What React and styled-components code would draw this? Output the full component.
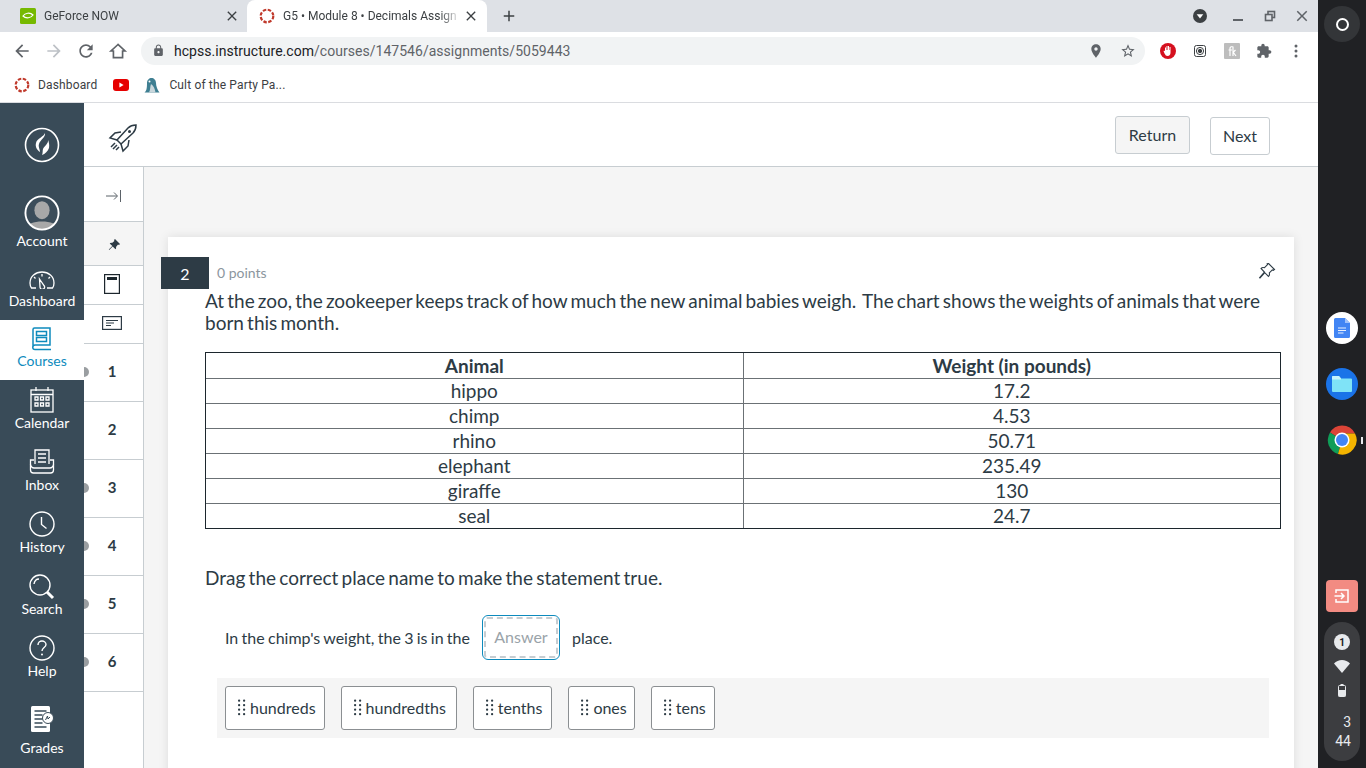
import React from "react";
import styled, { createGlobalStyle } from "styled-components";

const GlobalStyle = createGlobalStyle`
  html, body {
    margin: 0;
    padding: 0;
    height: 768px;
    overflow: hidden;
    background: #fff;
  }
  * { box-sizing: border-box; }
`;

const Screen = styled.div`
  display: flex;
  width: 1366px;
  height: 768px;
  overflow: hidden;
`;

const Browser = styled.div`
  width: 1318px;
  display: flex;
  flex-direction: column;
  font-family: Roboto, "Liberation Sans", sans-serif;
`;

/* chrome */
const TabStrip = styled.div`
  height: 32px;
  background: #dee1e6;
  display: flex;
  align-items: flex-end;
  padding-left: 8px;
  flex-shrink: 0;
`;

const Tab = styled.div`
  width: ${(p) => (p.$active ? "240px" : "232px")};
  margin-right: ${(p) => (p.$active ? "0" : "7px")};
  height: 32px;
  display: flex;
  align-items: center;
  padding: 0 ${(p) => (p.$active ? "8px" : "0")} 0 12px;
  gap: 8px;
  font-size: 12px;
  color: #3c4043;
  background: ${(p) => (p.$active ? "#fff" : "transparent")};
  border-radius: 8px 8px 0 0;
`;

const TabTitle = styled.span`
  flex: 1;
  white-space: nowrap;
  margin-right: -6px;
  mask-image: linear-gradient(to right, #000 88%, transparent);
`;

const NewTab = styled.div`
  margin-left: 13px;
  height: 32px;
  display: flex;
  align-items: center;
`;

const WindowControls = styled.div`
  margin-left: auto;
  height: 32px;
  display: flex;
  align-items: center;
  padding-right: 7px;
  gap: 16px;
`;

const Toolbar = styled.div`
  height: 37px;
  display: flex;
  align-items: center;
  padding: 0 0 0 12px;
  background: #fff;
  flex-shrink: 0;
`;

const NavIcons = styled.div`
  display: flex;
  gap: 12px;
  align-items: center;
  width: 129px;
`;

const Omnibox = styled.div`
  width: 1004px;
  height: 28px;
  border-radius: 14px;
  background: #f1f3f4;
  display: flex;
  align-items: center;
  padding: 0 9px 0 11px;
  font-size: 14px;
  letter-spacing: 0.03px;
`;

const Host = styled.span`
  margin-left: 9px;
  color: #202124;
`;

const UrlPath = styled.span`
  color: #5f6368;
`;

const OmniIcons = styled.div`
  margin-left: auto;
  display: flex;
  gap: 16px;
`;

const Extensions = styled.div`
  display: flex;
  align-items: center;
  gap: 16px;
  margin-left: 15px;
`;

const Bookmarks = styled.div`
  height: 34px;
  border-bottom: 1px solid #dadce0;
  display: flex;
  align-items: center;
  padding: 0 0 2px 14px;
  font-size: 12px;
  letter-spacing: 0.15px;
  color: #3c4043;
  background: #fff;
  flex-shrink: 0;
`;

const BookmarkLabel = styled.span`
  margin-left: ${(p) => p.$left || 8}px;
`;

const BookmarkIcon = styled.svg`
  margin-left: ${(p) => p.$left || 0}px;
  flex-shrink: 0;
`;

/* canvas page */
const Page = styled.div`
  flex: 1;
  display: flex;
  min-height: 0;
  font-family: Lato, "Liberation Sans", sans-serif;
`;

const GlobalNav = styled.nav`
  width: 84px;
  background: #394b58;
  display: flex;
  flex-direction: column;
  align-items: stretch;
  flex-shrink: 0;
`;

const NavItem = styled.div`
  height: ${(p) => p.$h}px;
  display: flex;
  flex-direction: column;
  align-items: center;
  padding-top: ${(p) => p.$top || 0}px;
  gap: ${(p) => p.$gap || 0}px;
  font-size: 14px;
  line-height: 17px;
  color: ${(p) => (p.$active ? "#0e8bbd" : "#fff")};
  background: ${(p) => (p.$active ? "#fff" : "transparent")};
`;

const Main = styled.div`
  flex: 1;
  display: flex;
  flex-direction: column;
  min-width: 0;
`;

const TopBar = styled.div`
  height: 64px;
  background: #fff;
  border-bottom: 1px solid #c7cdd1;
  display: flex;
  align-items: center;
  padding: 1px 48px 0 24px;
  flex-shrink: 0;
`;

const Rocket = styled.svg`
  margin-top: 6px;
`;

const TopButton = styled.div`
  height: 38px;
  display: flex;
  align-items: center;
  justify-content: center;
  border: 1px solid #c7cdd1;
  border-radius: 3px;
  font-size: 16px;
  color: #2d3b45;
  padding-bottom: 2px;
  width: ${(p) => p.$w}px;
  background: ${(p) => (p.$plain ? "#fff" : "#f5f5f5")};
  margin-left: ${(p) => (p.$plain ? "20px" : "auto")};
  position: relative;
  top: ${(p) => (p.$plain ? 1 : 0)}px;
`;

const Body = styled.div`
  flex: 1;
  display: flex;
  min-height: 0;
  background: #f5f5f5;
`;

const QuestionNav = styled.div`
  width: 60px;
  background: #fff;
  border-right: 1px solid #c7cdd1;
  flex-shrink: 0;
  display: flex;
  flex-direction: column;
`;

const NavRow = styled.div`
  height: ${(p) => p.$h}px;
  display: flex;
  align-items: center;
  justify-content: center;
  border-bottom: 1px solid #c7cdd1;
  background: ${(p) => (p.$shaded ? "#f5f5f5" : "#fff")};
  position: relative;
  font-size: 15px;
  font-weight: 700;
  color: #2d3b45;
  padding: ${(p) => p.$pad || "0 3px 0 0"};
`;

const NavDot = styled.span`
  position: absolute;
  left: 0;
  top: 50%;
  width: 5px;
  height: 10px;
  margin-top: -6px;
  background: #9a9ea1;
  border-radius: 0 5px 5px 0;
`;

const Content = styled.div`
  flex: 1;
  padding: 70px 24px 0;
  min-width: 0;
`;

const Card = styled.section`
  position: relative;
  background: #fff;
  height: 600px;
  padding: 21px 13px 0 37px;
  box-shadow: 0 0 10px rgba(0, 0, 0, 0.1);
`;

const QuestionBadge = styled.div`
  position: absolute;
  left: -7px;
  top: 20px;
  width: 48px;
  height: 32px;
  background: #2d3b45;
  color: #fff;
  font-size: 16px;
  display: flex;
  align-items: center;
  justify-content: center;
`;

const PinIcon = styled.svg`
  position: absolute;
  right: 18px;
  top: 25px;
`;

const Points = styled.div`
  font-size: 14px;
  line-height: 30px;
  height: 32px;
  color: #8b969e;
  margin-left: 12px;
`;

const Prompt = styled.p`
  margin: 0;
  font-size: 19px;
  line-height: 22px;
  color: #2d3b45;
  height: 52px;
  word-spacing: -0.09em;
`;

const ZooTable = styled.table`
  width: 1076px;
  border-collapse: collapse;
  outline: 1px solid #1c262d;
  outline-offset: -1px;
  margin-top: 10px;
  table-layout: fixed;
  font-size: 19px;
  color: #2d3b45;
`;

const Cell = styled.td`
  height: ${(p) => (p.$head ? 26 : 25)}px;
  padding: 0 0 1px;
  text-align: center;
  line-height: 23px;
  border: 1px solid #6b7175;
  font-weight: ${(p) => (p.$head ? 700 : 400)};
`;

const DragPrompt = styled.p`
  margin: 37px 0 0;
  font-size: 19px;
  line-height: 24px;
  color: #2d3b45;
  word-spacing: -0.085em;
`;

const Sentence = styled.div`
  display: flex;
  align-items: center;
  margin: 25px 0 0 20px;
  height: 45px;
  font-size: 16px;
  color: #2d3b45;
  word-spacing: -0.05em;
`;

const AnswerSlot = styled.div`
  width: 78px;
  height: 45px;
  margin: 0 12px;
  border: 1px solid #0e8bbd;
  border-radius: 6px;
  padding: 1px;
  display: flex;
`;

const AnswerInner = styled.div`
  flex: 1;
  border: 2px dashed #c7cdd1;
  border-radius: 3px;
  display: flex;
  align-items: center;
  justify-content: center;
  color: #9aa3a9;
  padding-bottom: 3px;
`;

const ChoiceBank = styled.div`
  margin: 18px 12px 0;
  height: 60px;
  background: #f5f5f5;
  padding: 8px;
  display: flex;
  gap: 16px;
`;

const Choice = styled.div`
  height: 44px;
  border: 1px solid #8b8f92;
  border-radius: 3px;
  background: #fff;
  display: flex;
  align-items: center;
  gap: 3px;
  padding: 0 ${(p) => p.$pad}px 2px 11px;
  font-size: 16px;
  color: #2d3b45;
`;

/* chrome os shelf */
const Shelf = styled.aside`
  width: 48px;
  background: #202124;
  display: flex;
  flex-direction: column;
  align-items: center;
  padding: 6px 0 7px;
  font-family: Roboto, "Liberation Sans", sans-serif;
`;

const Launcher = styled.div`
  width: 36px;
  height: 36px;
  border-radius: 50%;
  background: #333538;
  display: flex;
  align-items: center;
  justify-content: center;
`;

const LauncherRing = styled.div`
  width: 13px;
  height: 13px;
  border-radius: 50%;
  border: 2px solid #fff;
`;

const ShelfApps = styled.div`
  margin-top: 270px;
  display: flex;
  flex-direction: column;
  gap: 24px;
`;

const ShelfApp = styled.div`
  position: relative;
  width: 32px;
  height: 32px;
  border-radius: 50%;
  background: ${(p) => p.$bg};
  display: flex;
  align-items: center;
  justify-content: center;
  overflow: ${(p) => (p.$running ? "visible" : "hidden")};
`;

const RunningMark = styled.span`
  position: absolute;
  right: -5px;
  top: 13px;
  width: 2px;
  height: 7px;
  background: #e8eaed;
`;

const ExitButton = styled.div`
  margin-top: auto;
  width: 32px;
  height: 32px;
  border-radius: 4px;
  background: #f28b82;
  display: flex;
  align-items: center;
  justify-content: center;
`;

const StatusPill = styled.div`
  margin-top: 10px;
  width: 36px;
  height: 139px;
  border-radius: 18px;
  background: #3c3d40;
  display: flex;
  flex-direction: column;
  align-items: center;
  padding-top: 12px;
  color: #e8eaed;
  font-size: 13px;
`;

const Notify = styled.div`
  width: 16px;
  height: 16px;
  border-radius: 50%;
  background: #e8eaed;
  color: #202124;
  font-size: 10px;
  font-weight: 700;
  display: flex;
  align-items: center;
  justify-content: center;
  flex-shrink: 0;
`;

const StatusIcon = styled.svg`
  margin-top: ${(p) => p.$top}px;
  flex-shrink: 0;
`;

const Clock = styled.div`
  margin-top: 16px;
  line-height: 19px;
  text-align: right;
  width: 18px;
  font-size: 14px;
`;

const grey = "#5f6368";
const closePath =
  "M19 6.41L17.59 5 12 10.59 6.41 5 5 6.41 10.59 12 5 17.59 6.41 19 12 13.41 17.59 19 19 17.59 13.41 12z";

const MaterialIcon = ({ d, size = 18, color = grey }) => (
  <svg width={size} height={size} viewBox="0 0 24 24" fill={color}>
    <path d={d} />
  </svg>
);

const CanvasFavicon = () => (
  <BookmarkIcon width="16" height="16" viewBox="0 0 16 16" fill="none">
    <circle cx="8" cy="8" r="6.3" stroke="#c0392b" strokeWidth="2.2" strokeDasharray="3.4 1.55" />
  </BookmarkIcon>
);

const Grip = () => (
  <svg width="10" height="17" viewBox="0 0 10 17" fill="#2d3b45">
    {[0.5, 5, 9.5, 14].map((y) =>
      [1, 6].map((x) => <rect key={`${x}-${y}`} x={x} y={y} width="2.2" height="2.2" rx="1" />)
    )}
  </svg>
);

const rows = [
  ["hippo", "17.2"],
  ["chimp", "4.53"],
  ["rhino", "50.71"],
  ["elephant", "235.49"],
  ["giraffe", "130"],
  ["seal", "24.7"],
];

const choices = [
  ["hundreds", 8],
  ["hundredths", 10],
  ["tenths", 9],
  ["ones", 7],
  ["tens", 8],
];

const questions = [
  [1, true],
  [2, false],
  [3, true],
  [4, true],
  [5, true],
  [6, true],
];

const App = () => {
  return (
    <Screen>
      <GlobalStyle />
      <Browser>
        <TabStrip>
          <Tab>
            <svg width="16" height="16" viewBox="0 0 16 16">
              <rect width="16" height="16" rx="1.5" fill="#76b900" />
              <path d="M3 8c2-3 7-4 10-1-2 3-7 4-10 1z" fill="none" stroke="#fff" strokeWidth="1.2" />
            </svg>
            <TabTitle>GeForce NOW</TabTitle>
            <MaterialIcon size={16} color="#3c4043" d={closePath} />
          </Tab>
          <Tab $active>
            <CanvasFavicon />
            <TabTitle>G5 • Module 8 • Decimals Assign</TabTitle>
            <MaterialIcon size={16} color="#3c4043" d={closePath} />
          </Tab>
          <NewTab>
            <MaterialIcon size={18} color="#3c4043" d="M19 13h-6v6h-2v-6H5v-2h6V5h2v6h6v2z" />
          </NewTab>
          <WindowControls>
            <svg width="14" height="14" viewBox="0 0 14 14">
              <circle cx="7" cy="7" r="7" fill="#3c4043" />
              <path d="M3.7 5.2h6.6L7 9.6z" fill="#fff" />
            </svg>
            <svg width="14" height="14" viewBox="0 0 14 14" style={{ marginLeft: 8 }}>
              <rect x="2" y="10" width="10" height="2" fill="#5f6368" />
            </svg>
            <svg width="14" height="14" viewBox="0 0 14 14" fill="none" stroke="#5f6368" strokeWidth="1.6" style={{ marginLeft: 2 }}>
              <rect x="5" y="2.5" width="6.5" height="6" />
              <rect x="2.5" y="5.5" width="6.5" height="6" fill="#dee1e6" />
            </svg>
            <MaterialIcon size={18} d={closePath} />
          </WindowControls>
        </TabStrip>

        <Toolbar>
          <NavIcons>
            <MaterialIcon size={20} d="M20 11H7.83l5.59-5.59L12 4l-8 8 8 8 1.41-1.41L7.83 13H20v-2z" />
            <MaterialIcon size={20} color="#bdc1c6" d="M12 4l-1.41 1.41L16.17 11H4v2h12.17l-5.58 5.59L12 20l8-8z" />
            <MaterialIcon size={20} d="M17.65 6.35C16.2 4.9 14.21 4 12 4c-4.42 0-7.99 3.58-7.99 8s3.57 8 7.99 8c3.73 0 6.84-2.55 7.73-6h-2.08c-.82 2.33-3.04 4-5.65 4-3.31 0-6-2.69-6-6s2.69-6 6-6c1.66 0 3.14.69 4.22 1.78L13 11h7V4l-2.35 2.35z" />
            <svg width="20" height="20" viewBox="0 0 24 24" fill="none" stroke={grey} strokeWidth="2">
              <path d="M12 4.2L3.6 12H6.5v8h11v-8h2.900z" />
            </svg>
          </NavIcons>
          <Omnibox>
            <MaterialIcon size={13} d="M18 8h-1V6c0-2.76-2.24-5-5-5S7 3.24 7 6v2H6c-1.1 0-2 .9-2 2v10c0 1.1.9 2 2 2h12c1.1 0 2-.9 2-2V10c0-1.1-.9-2-2-2zm-6 9c-1.1 0-2-.9-2-2s.9-2 2-2 2 .9 2 2-.9 2-2 2zm3.1-9H8.9V6c0-1.71 1.39-3.1 3.1-3.1 1.71 0 3.1 1.39 3.1 3.1v2z" />
            <Host>hcpss.instructure.com</Host>
            <UrlPath>/courses/147546/assignments/5059443</UrlPath>
            <OmniIcons>
              <MaterialIcon size={16} d="M12 2C8.13 2 5 5.13 5 9c0 5.25 7 13 7 13s7-7.75 7-13c0-3.87-3.13-7-7-7zm0 9.5c-1.38 0-2.5-1.12-2.5-2.5s1.12-2.5 2.5-2.5 2.5 1.12 2.5 2.5-1.12 2.5-2.5 2.5z" />
              <MaterialIcon size={16} d="M22 9.24l-7.19-.62L12 2 9.19 8.63 2 9.24l5.46 4.73L5.82 21 12 17.27 18.18 21l-1.63-7.03L22 9.24zM12 15.4l-3.76 2.27 1-4.28-3.32-2.88 4.38-.38L12 6.1l1.71 4.04 4.38.38-3.32 2.88 1 4.28L12 15.4z" />
            </OmniIcons>
          </Omnibox>
          <Extensions>
            <svg width="16" height="16" viewBox="0 0 16 16">
              <circle cx="8" cy="8" r="8" fill="#d5101f" />
              <path d="M5 8V4.500h1V7h.5V3h1v4H8V3h1v4h.5V4h1v5.500c0 2-1 3.500-3 3.500-1.500 0-2-.8-3-2.500L3.500 8c.5-.5 1-.4 1.500 0z" fill="#fff" />
            </svg>
            <svg width="16" height="16" viewBox="0 0 16 16" fill="none" stroke="#3c4043">
              <rect x="2.500" y="2.500" width="11" height="11" rx="2" />
              <circle cx="8" cy="8" r="3.600" />
              <circle cx="8" cy="8" r="1.700" fill="#3c4043" />
            </svg>
            <svg width="16" height="16" viewBox="0 0 16 16">
              <rect width="16" height="16" rx="1" fill="#bdbdbd" />
              <path d="M6 13V5.500C6 4 7 3.500 8.500 3.500M4.500 7H8M9 3.500V13M9 9l3 4M9 9.500l2.500-2.500" fill="none" stroke="#fff" strokeWidth="1.200" />
            </svg>
            <MaterialIcon size={16} d="M20.5 11H19V7c0-1.1-.9-2-2-2h-4V3.5C13 2.12 11.88 1 10.5 1S8 2.12 8 3.5V5H4c-1.1 0-1.99.9-1.99 2v3.8H3.5c1.49 0 2.7 1.21 2.7 2.7s-1.21 2.7-2.7 2.7H2V20c0 1.1.9 2 2 2h3.8v-1.5c0-1.49 1.21-2.7 2.7-2.7 1.49 0 2.7 1.21 2.7 2.7V22H17c1.1 0 2-.9 2-2v-4h1.5c1.38 0 2.5-1.12 2.5-2.5S21.88 11 20.5 11z" />
            <svg width="16" height="16" viewBox="0 0 16 16" fill={grey}>
              <circle cx="8" cy="3" r="1.500" />
              <circle cx="8" cy="8" r="1.500" />
              <circle cx="8" cy="13" r="1.500" />
            </svg>
          </Extensions>
        </Toolbar>

        <Bookmarks>
          <CanvasFavicon />
          <BookmarkLabel>Dashboard</BookmarkLabel>
          <BookmarkIcon $left={16} width="16" height="12" viewBox="0 0 16 12">
            <rect width="16" height="12" rx="3" fill="#e60000" />
            <path d="M6.400 3.400v5.200L10.600 6z" fill="#fff" />
          </BookmarkIcon>
          <BookmarkIcon $left={15} width="16" height="16" viewBox="0 0 16 16">
            <path d="M0.500 15.500C3 14 3 9 3 6c0-3 2.200-5 4.500-5S12 3 12 6c0 3 1.500 7 3.500 9.500z" fill="#3f7f92" />
            <path d="M5 15.500c1.500-2.500 1-6 2-8.500 2.500 1.500 4 5 4.500 8.500z" fill="#c9d7dc" />
            <circle cx="5.500" cy="4.500" r="1" fill="#fff" />
          </BookmarkIcon>
          <BookmarkLabel $left={9}>Cult of the Party Pa...</BookmarkLabel>
        </Bookmarks>

        <Page>
          <GlobalNav>
            <NavItem $h={81} $top={24}>
              <svg width="36" height="36" viewBox="0 0 36 36" fill="none">
                <circle cx="18" cy="18" r="16.500" stroke="#fff" strokeWidth="1.600" />
                <path d="M21 6c1 4-5 7-6 11-1 3 1 5 1 8-3-2-5-5-4-9 1-5 8-6 9-10zM24 13c.5 4-4 6-5 9-.6 2 0 4-1 6 3-1 6-4 7-7 .6-3 0-6-1-8z" fill="#fff" />
              </svg>
            </NavItem>
            <NavItem $h={76} $top={11} $gap={1}>
              <svg width="36" height="36" viewBox="0 0 38 38">
                <defs>
                  <clipPath id="avatarClip">
                    <circle cx="19" cy="19" r="17.500" />
                  </clipPath>
                </defs>
                <g clipPath="url(#avatarClip)">
                  <rect width="38" height="38" fill="#3c4d5a" />
                  <ellipse cx="19" cy="16" rx="8" ry="9.500" fill="#a8a8a8" />
                  <path d="M2 38c0-8 8-10 17-10s17 2 17 10z" fill="#a8a8a8" />
                </g>
                <circle cx="19" cy="19" r="17.500" fill="none" stroke="#fff" strokeWidth="2" />
              </svg>
              <span>Account</span>
            </NavItem>
            <NavItem $h={60} $top={11} $gap={3}>
              <svg width="26" height="18" viewBox="0 0 26 18" fill="none" stroke="#fff" strokeWidth="1.300">
                <path d="M7 17H2.500C1.300 15.500 1 13.500 1 12 1 5.500 6.500 1 13 1s12 4.500 12 11c0 1.500-.3 3.500-1.500 5H18" />
                <path d="M10.500 8l4.500 6.500a2.300 2.300 0 1 1-4 1.500z" />
                <path d="M13 3v2.500M5 6l1.500 1.500M21 6l-1.500 1.500" />
              </svg>
              <span>Dashboard</span>
            </NavItem>
            <NavItem $h={60} $top={7} $gap={1} $active>
              <svg width="20" height="24" viewBox="0 0 20 24" fill="none" stroke="#0e8bbd" strokeWidth="1.500">
                <path d="M1 20V2.500A1.500 1.500 0 0 1 2.500 1H18v17H3a2 2 0 0 0 0 4.500h16" />
                <rect x="4.500" y="4.500" width="10" height="4" />
                <rect x="4.500" y="10.500" width="10" height="4" />
              </svg>
              <span>Courses</span>
            </NavItem>
            <NavItem $h={62} $top={7} $gap={1}>
              <svg width="24" height="26" viewBox="0 0 24 26" fill="none" stroke="#fff" strokeWidth="1.300">
                <rect x="1" y="3" width="22" height="22" />
                <path d="M1 7.500h22M6 0v4M18 0v4" />
                <path d="M5 10h3v3H5zM10.500 10h3v3h-3zM16 10h3v3h-3zM5 16h3v3H5zM10.500 16h3v3h-3zM16 16h3v3h-3z" />
              </svg>
              <span>Calendar</span>
            </NavItem>
            <NavItem $h={62} $top={7} $gap={2}>
              <svg width="26" height="25" viewBox="0 0 26 25" fill="none" stroke="#fff" strokeWidth="1.300">
                <path d="M6 15V1h14v14" />
                <path d="M9 5h8M9 9h8M9 13h8" />
                <path d="M5 11H1.500v10a3 3 0 0 0 3 3h17a3 3 0 0 0 3-3V11H21" />
                <path d="M1.500 15.500c0 2 2 3.500 3.500 3.500h16c1.500 0 3.500-1.500 3.500-3.500" />
              </svg>
              <span>Inbox</span>
            </NavItem>
            <NavItem $h={62} $top={7} $gap={1}>
              <svg width="26" height="26" viewBox="0 0 26 26" fill="none" stroke="#fff" strokeWidth="1.400">
                <circle cx="13" cy="13" r="12" />
                <path d="M12.500 6v7.500l5 4" />
              </svg>
              <span>History</span>
            </NavItem>
            <NavItem $h={62} $top={8} $gap={0}>
              <svg width="26" height="26" viewBox="0 0 26 26" fill="none" stroke="#fff" strokeWidth="1.400">
                <circle cx="11" cy="11" r="10" />
                <path d="M5 10c.5-3 2.500-5 5-5" />
                <path d="M18 18l6 6" strokeWidth="3" />
              </svg>
              <span>Search</span>
            </NavItem>
            <NavItem $h={62} $top={7} $gap={1}>
              <svg width="26" height="26" viewBox="0 0 26 26" fill="none" stroke="#fff" strokeWidth="1.400">
                <circle cx="13" cy="13" r="12" />
                <path d="M9 10c0-2.500 2-4 4-4s4 1.500 4 3.500c0 3-4 3-4 6.500" />
                <circle cx="13" cy="19.500" r="1" fill="#fff" stroke="none" />
              </svg>
              <span>Help</span>
            </NavItem>
            <NavItem $h={78} $top={15} $gap={6}>
              <svg width="24" height="28" viewBox="0 0 24 28">
                <rect x="1" y="1" width="19" height="26" rx="1.500" fill="#fff" />
                <path d="M4.500 6h12M4.500 10h8M4.500 14h8M4.500 18h8M4.500 22h12" stroke="#394b58" strokeWidth="1.400" />
                <circle cx="18" cy="13" r="5.500" fill="#fff" stroke="#394b58" />
                <path d="M15.500 15l2-4 .5 3 2-2" stroke="#394b58" fill="none" />
              </svg>
              <span>Grades</span>
            </NavItem>
          </GlobalNav>

          <Main>
            <TopBar>
              <Rocket width="30" height="30" viewBox="0 0 30 30" fill="none" stroke="#2d3b45" strokeWidth="1.500">
                <path d="M9 17L20 5c2-2 5-3 8-3 0 3-1 6-3 8L13 21z" />
                <path d="M9 17l-7-2 5-5 6-1M13 21l2 7 5-5 1-6" />
                <circle cx="21.500" cy="8.500" r="1.500" fill="#2d3b45" stroke="none" />
                <path d="M7 20l-4 4M9 22l-4 4M11 24l-3 3" />
              </Rocket>
              <TopButton $w={75}>Return</TopButton>
              <TopButton $w={60} $plain>Next</TopButton>
            </TopBar>
            <Body>
              <QuestionNav>
                <NavRow $h={55} $pad="3px 0 0 1px">
                  <svg width="16" height="12" viewBox="0 0 16 12" fill="none" stroke="#5b6268">
                    <path d="M0 6h11M8 2.500L11.500 6 8 9.500M14.500 0v12" />
                  </svg>
                </NavRow>
                <NavRow $h={44} $shaded $pad="3px 0 0 1px">
                  <svg width="12" height="12" viewBox="0 0 12 12" fill="#2d3b45">
                    <path d="M7 0l5 5-1 1-1-.4L8 8c.3 1 .1 1.800-.5 2.300L4.700 7.500 1.200 11 .8 10.600l3.500-3.600L1.700 4.500C2.200 3.900 3 3.700 4 4l2.400-2-.4-1z" />
                  </svg>
                </NavRow>
                <NavRow $h={39} $pad="0 3px 2px 0">
                  <svg width="16" height="20" viewBox="0 0 16 20" fill="none" stroke="#1c262d" strokeWidth="1.200">
                    <rect x="0.600" y="0.600" width="14.800" height="18.800" />
                    <rect x="3" y="3" width="10" height="3" fill="#1c262d" stroke="none" />
                  </svg>
                </NavRow>
                <NavRow $h={39} $pad="0 3px 2px 0">
                  <svg width="20" height="14" viewBox="0 0 20 14" fill="none" stroke="#2d3b45" strokeWidth="1.200">
                    <rect x="0.600" y="0.600" width="18.800" height="12.800" />
                    <path d="M4 4.500h12M4 7h8M4 9.500h5" />
                  </svg>
                </NavRow>
                {questions.map(([n, dot]) => (
                  <NavRow key={n} $h={58} $pad="0 3px 3px 0">
                    {dot && <NavDot />}
                    {n}
                  </NavRow>
                ))}
              </QuestionNav>
              <Content>
                <Card>
                  <QuestionBadge>2</QuestionBadge>
                  <PinIcon width="18" height="18" viewBox="0 0 18 18" fill="none" stroke="#2d3b45" strokeWidth="1.100">
                    <path d="M10.500 1.500l6 6-1.200.8-1-.4-3 3c.4 1.500.2 2.700-.8 3.500L6.800 10.700 2 16l-.4-.4L6.400 10 3 6.500c.8-1 2-1.200 3.500-.8l3-3-.3-1z" />
                  </PinIcon>
                  <Points>0 points</Points>
                  <Prompt>
                    At the zoo, the zookeeper keeps track of how much the new animal babies weigh.&nbsp; The chart shows the weights of animals that were born this month.
                  </Prompt>
                  <ZooTable>
                    <tbody>
                      <tr>
                        <Cell $head>Animal</Cell>
                        <Cell $head>Weight (in pounds)</Cell>
                      </tr>
                      {rows.map(([animal, weight]) => (
                        <tr key={animal}>
                          <Cell>{animal}</Cell>
                          <Cell>{weight}</Cell>
                        </tr>
                      ))}
                    </tbody>
                  </ZooTable>
                  <DragPrompt>Drag the correct place name to make the statement true.</DragPrompt>
                  <Sentence>
                    In the chimp's weight, the 3 is in the
                    <AnswerSlot>
                      <AnswerInner>Answer</AnswerInner>
                    </AnswerSlot>
                    place.
                  </Sentence>
                  <ChoiceBank>
                    {choices.map(([label, pad]) => (
                      <Choice key={label} $pad={pad}>
                        <Grip />
                        {label}
                      </Choice>
                    ))}
                  </ChoiceBank>
                </Card>
              </Content>
            </Body>
          </Main>
        </Page>
      </Browser>

      <Shelf>
        <Launcher>
          <LauncherRing />
        </Launcher>
        <ShelfApps>
          <ShelfApp $bg="#fff">
            <svg width="16" height="20" viewBox="0 0 16 20">
              <path d="M1.500 0H11l5 5v13.500a1.500 1.500 0 0 1-1.500 1.500h-13A1.500 1.500 0 0 1 0 18.500v-17A1.500 1.500 0 0 1 1.500 0z" fill="#4285f4" />
              <path d="M11 0l5 5h-5z" fill="#a1c2fa" />
              <path d="M4 10h8M4 12.500h8M4 15h5.500" stroke="#e8f0fe" strokeWidth="1" />
            </svg>
          </ShelfApp>
          <ShelfApp $bg="#1a73e8">
            <svg width="20" height="16" viewBox="0 0 20 16">
              <path d="M1 0h6l2 2.500h10a1 1 0 0 1 1 1V15a1 1 0 0 1-1 1H1a1 1 0 0 1-1-1V1a1 1 0 0 1 1-1z" fill="#7fe3f7" />
              <path d="M0 1a1 1 0 0 1 1-1h6l2 2.500v1H0z" fill="#c5f3fc" />
            </svg>
          </ShelfApp>
          <ShelfApp $bg="transparent" $running>
            <svg width="32" height="32" viewBox="0 0 32 32">
              <path d="M16 16L4 8.500A14.500 14.500 0 0 1 16 1.500a14.500 14.500 0 0 1 13 8H16z" fill="#db4437" />
              <path d="M16 16L4 8.500A14.500 14.500 0 0 0 12 30z" fill="#0f9d58" />
              <path d="M16 9.500h13A14.500 14.500 0 0 1 12 30l4-14z" fill="#f4b400" />
              <circle cx="16" cy="16" r="7.500" fill="#fff" />
              <circle cx="16" cy="16" r="6" fill="#4285f4" />
            </svg>
            <RunningMark />
          </ShelfApp>
        </ShelfApps>
        <ExitButton>
          <svg width="16" height="16" viewBox="0 0 16 16" fill="none" stroke="#fff" strokeWidth="1.500">
            <path d="M2 5V2h12v12H2v-3" />
            <path d="M0.500 8h9M7 5l3 3-3 3" />
          </svg>
        </ExitButton>
        <StatusPill>
          <Notify>1</Notify>
          <StatusIcon $top={10} width="16" height="13" viewBox="0 0 16 13">
            <path d="M0 3.500C2 1.500 5 0 8 0s6 1.500 8 3.500L8 13z" fill="#e8eaed" />
          </StatusIcon>
          <StatusIcon $top={11} width="8" height="13" viewBox="0 0 8 13">
            <rect x="2.500" y="0" width="3" height="2" fill="#e8eaed" />
            <rect x="0.500" y="1.500" width="7" height="11" rx="1" fill="none" stroke="#e8eaed" />
            <rect x="0.500" y="6" width="7" height="6.500" fill="#e8eaed" />
          </StatusIcon>
          <Clock>
            3
            <br />
            44
          </Clock>
        </StatusPill>
      </Shelf>
    </Screen>
  );
};

export default App;
